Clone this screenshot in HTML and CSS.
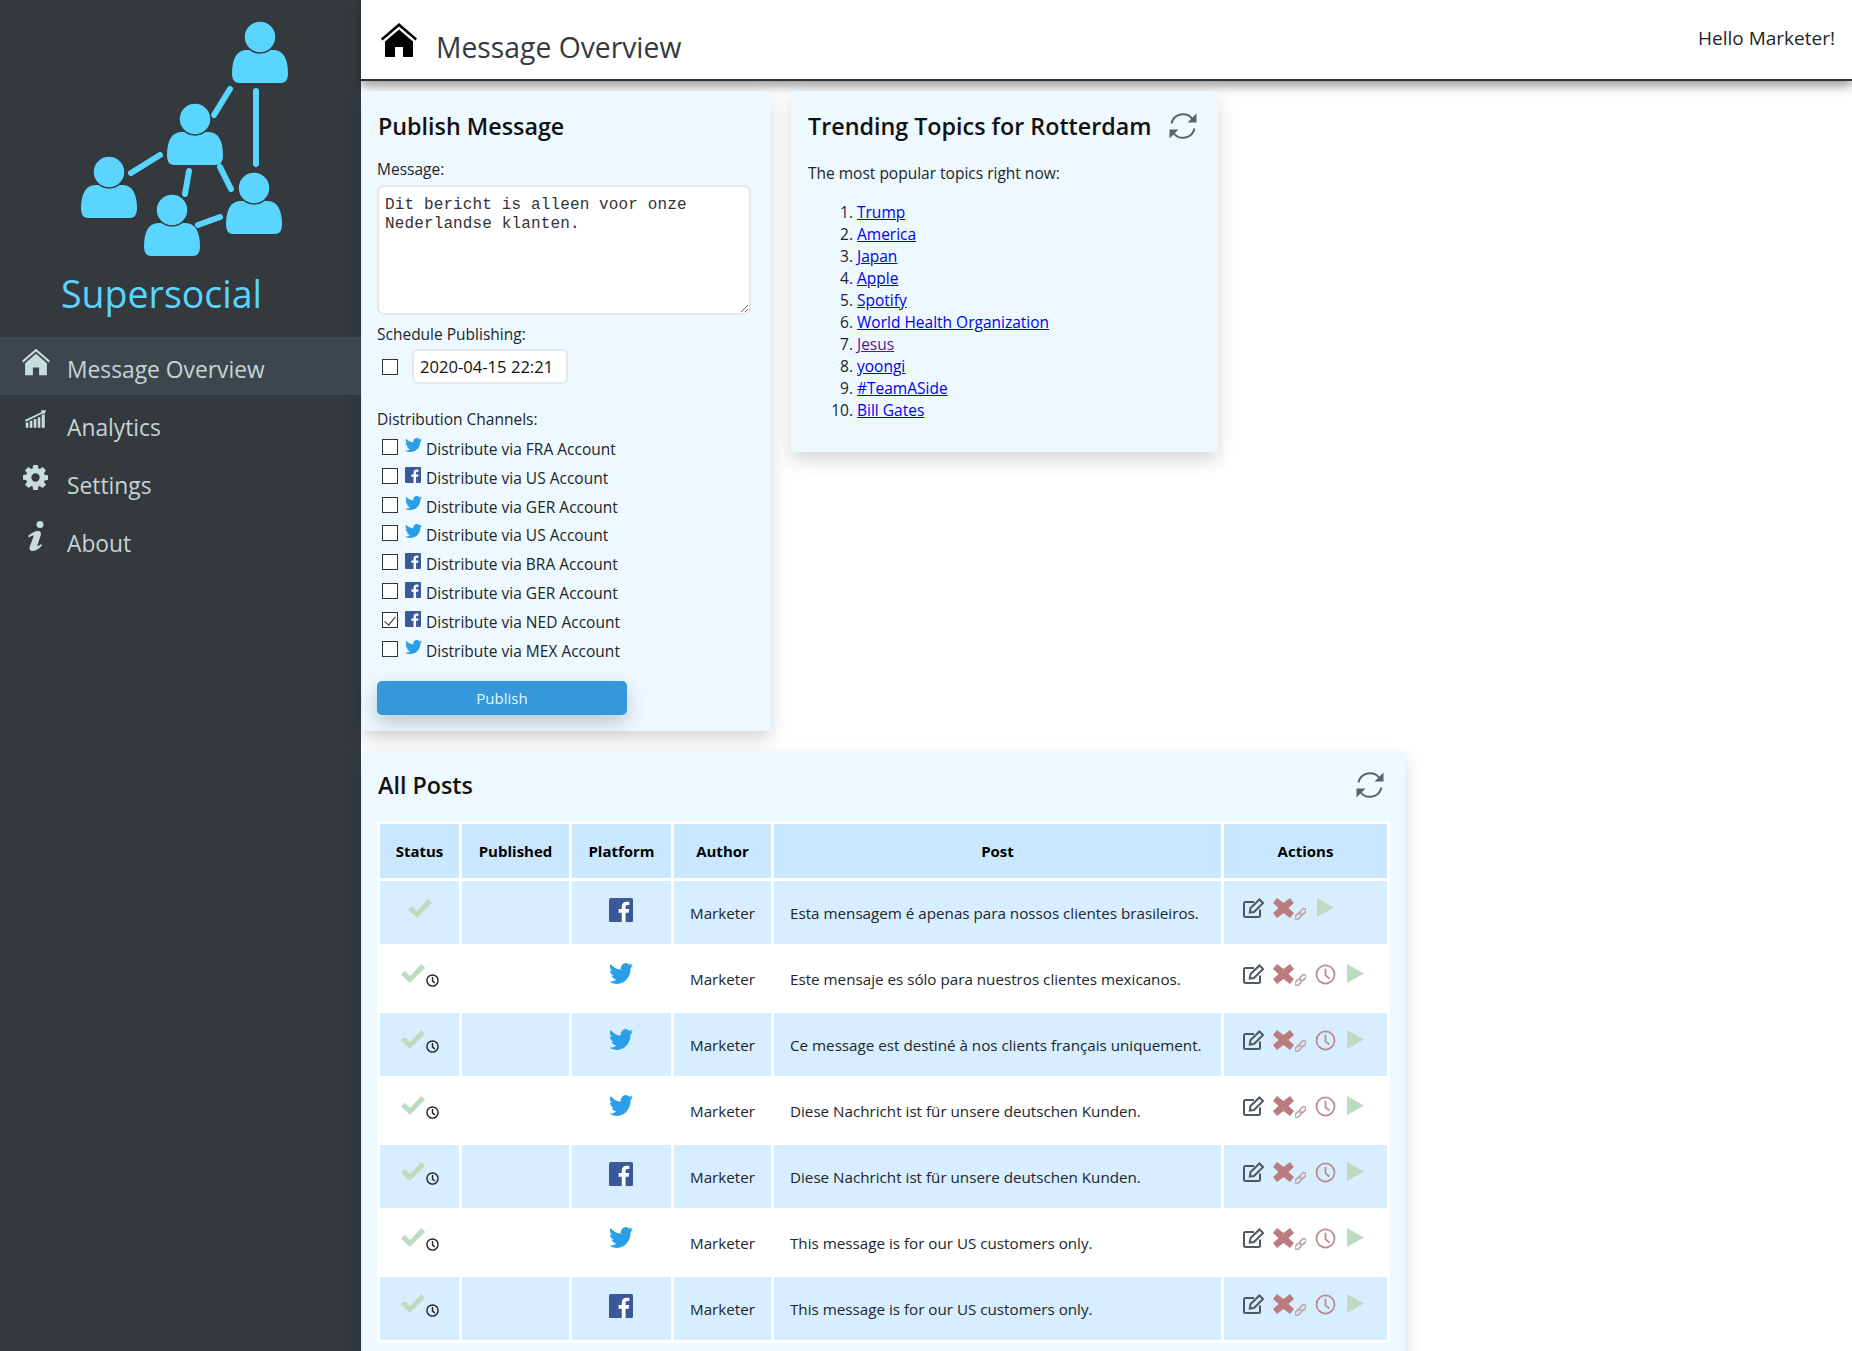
FILE: index.html
```html
<!DOCTYPE html>
<html lang="en">

<head>
    <meta charset="UTF-8">
    <meta name="viewport" content="width=device-width, initial-scale=1.0">
    <title>Supersocial - Message Overview</title>
    <link rel="stylesheet" href="styles.css">
</head>

<body>
    <!-- shared icons -->
    <svg class="icon-defs" xmlns="http://www.w3.org/2000/svg">
        <symbol id="i-home" viewBox="0 0 36 34">
            <path d="M18 0 36 15.500 34.500 17.500 18 3.500 1.500 17.500 0 15.500Z" />
            <path d="M18 6.500 32 18.500V34H22V24H14V34H4V18.500Z" />
        </symbol>
        <symbol id="i-twitter" viewBox="108 250 1576 1290" preserveAspectRatio="none">
            <path d="M1684 408q-67 98-162 167 1 14 1 42 0 130-38 259.500t-115.500 248.500-184.500 210.500-258 146-323 54.500q-271 0-496-145 35 4 78 4 225 0 401-138-105-2-188-64.500t-114-159.500q33 5 61 5 43 0 85-11-112-23-185.500-111.500t-73.500-205.500v-4q68 38 146 41-66-44-105-115t-39-154q0-88 44-163 121 149 294.500 238.500t371.500 99.500q-8-38-8-74 0-134 94.500-228.500t228.500-94.500q140 0 236 102 109-21 205-78-37 115-142 178 100-11 200-54z" />
        </symbol>
        <symbol id="i-facebook" viewBox="0 0 24 24">
            <rect width="24" height="24" rx="1.500" fill="#3b5998" />
            <path fill="#fff" d="M16.600 24v-9.300h3.100l.5-3.600h-3.600V8.800c0-1 .3-1.800 1.800-1.800h1.900V3.800c-.3 0-1.500-.1-2.800-.1-2.800 0-4.700 1.700-4.700 4.800v2.600H9.600v3.600h3.200V24Z" />
        </symbol>
        <symbol id="i-refresh" viewBox="0 0 28 28">
            <path class="stroke" d="M2.500 11.500A11.800 11.800 0 0 1 23.500 7" />
            <path class="stroke" d="M25.500 16.500A11.800 11.800 0 0 1 4.500 21" />
            <path d="M27.500 1.500V10.500H18.500Z" />
            <path d="M.5 26.500V17.500H9.500Z" />
        </symbol>
        <symbol id="i-check" viewBox="0 0 24 19">
            <path d="M0 10.500 3.800 6.700 9 12 20.200 0 24 3.700 9 19Z" />
        </symbol>
        <symbol id="i-clock" viewBox="0 0 24 24">
            <circle class="stroke" cx="12" cy="12" r="10.300" />
            <path class="stroke" d="M12 5.500V13L16.500 16.500" />
        </symbol>
        <symbol id="i-edit" viewBox="0 0 22 20">
            <path class="stroke" d="M17 11.500V17.500Q17 19 15.500 19H2.500Q1 19 1 17.500V5.500Q1 4 2.500 4H11" />
            <path class="stroke" d="M7.500 10 16.500 1.500 20 5 11 14 6.800 14.500Z" />
        </symbol>
        <symbol id="i-cross" viewBox="0 0 21 20">
            <path d="M4 0 10.500 5 17 0 21 5 15.500 10 21 15 17 20 10.500 15 4 20 0 15 5.500 10 0 5Z" />
        </symbol>
        <symbol id="i-link" viewBox="0 0 12 12">
            <g class="stroke" transform="rotate(-45 6 6)">
                <rect x="-1.500" y="3.800" width="7.500" height="4.400" rx="2.200" />
                <rect x="6" y="3.800" width="7.500" height="4.400" rx="2.200" />
            </g>
        </symbol>
        <symbol id="i-play" viewBox="0 0 17 19">
            <path d="M0 0 17 9.500 0 19Z" />
        </symbol>
    </svg>

    <div class="app">
        <nav class="sidebar">
            <svg class="logo" viewBox="0 0 361 270" xmlns="http://www.w3.org/2000/svg">
                <defs>
                    <g id="person">
                        <path d="M-14 13H14C23 13 28 22 28 36 28 42 26 46 21 46H-21C-26 46-28 42-28 36-28 22-23 13-14 13Z" />
                        <circle cy="0" r="16" stroke="#33393d" stroke-width="1.500" />
                    </g>
                </defs>
                <g class="logo-lines">
                    <line x1="230" y1="89" x2="214" y2="115" />
                    <line x1="256" y1="91" x2="256" y2="164" />
                    <line x1="160" y1="155" x2="131" y2="173" />
                    <line x1="189" y1="171" x2="185" y2="194" />
                    <line x1="220" y1="167" x2="231" y2="189" />
                    <line x1="220" y1="217" x2="198" y2="225" />
                </g>
                <use href="#person" x="260" y="37" />
                <use href="#person" x="195" y="119" />
                <use href="#person" x="109" y="172" />
                <use href="#person" x="172" y="210" />
                <use href="#person" x="254" y="188" />
            </svg>
            <div class="brand">Supersocial</div>
            <ul class="nav-list">
                <li class="nav-item active">
                    <svg class="nav-icon"><use href="#i-home" /></svg>
                    <span>Message Overview</span>
                </li>
                <li class="nav-item">
                    <svg class="nav-icon icon-analytics" viewBox="0 0 26 22" xmlns="http://www.w3.org/2000/svg">
                        <path d="M2 15h3v6H2zM6.500 13h3v8h-3zM11 11h3v10h-3zM15.500 9h3v12h-3zM20 6h3.500v15H20z" />
                        <path d="M1 12 20 3 19 1 25 1 23 6 21.500 4.500 2 14Z" />
                    </svg>
                    <span>Analytics</span>
                </li>
                <li class="nav-item">
                    <svg class="nav-icon icon-gear" viewBox="128 128 1536 1536" xmlns="http://www.w3.org/2000/svg">
                        <path d="M1152 896q0-106-75-181t-181-75-181 75-75 181 75 181 181 75 181-75 75-181zm512-109v222q0 12-8 23t-20 13l-185 28q-19 54-39 91 35 50 107 138 10 12 10 25t-9 23q-27 37-99 108t-94 71q-12 0-26-9l-138-108q-44 23-91 38-16 136-29 186-7 28-36 28h-222q-14 0-24.500-8.500t-11.500-21.500l-28-184q-49-16-90-37l-141 107q-10 9-25 9-14 0-25-11-126-114-165-168-7-10-7-23 0-12 8-23 15-21 51-66.500t54-70.500q-27-50-41-99l-183-27q-13-2-21-12.500t-8-23.500v-222q0-12 8-23t19-13l186-28q14-46 39-92-40-57-107-138-10-12-10-24 0-10 9-23 26-36 98.500-107.500t94.500-71.500q13 0 26 10l138 107q44-23 91-38 16-136 29-186 7-28 36-28h222q14 0 24.500 8.500t11.500 21.500l28 184q49 16 90 37l142-107q9-9 24-9 13 0 25 10 129 119 165 170 7 8 7 22 0 12-8 23-15 21-51 66.500t-54 70.500q26 50 41 98l183 28q13 2 21 12.500t8 23.500z" />
                    </svg>
                    <span>Settings</span>
                </li>
                <li class="nav-item">
                    <svg class="nav-icon icon-info" viewBox="0 0 20 30" xmlns="http://www.w3.org/2000/svg">
                        <circle cx="14" cy="3.500" r="3.500" />
                        <path d="M2 15C5 12 9 10 12 10 15 10 15.500 12.500 14.500 15L11.500 24C11 25.500 12 25.500 15 23L16 24.500C13 28 9.500 30 6.500 30 3.500 30 3 27.500 4 25L7.500 15.500C8 14 7 14 3 16.500Z" />
                    </svg>
                    <span>About</span>
                </li>
            </ul>
        </nav>

        <div class="main">
            <header class="topbar">
                <svg class="topbar-icon"><use href="#i-home" /></svg>
                <h1>Message Overview</h1>
                <div class="greeting">Hello Marketer!</div>
            </header>

            <div class="content">
                <div class="card-row">
                    <section class="card publish-card">
                        <h2>Publish Message</h2>
                        <label class="field-label" for="message">Message:</label>
                        <textarea id="message">Dit bericht is alleen voor onze Nederlandse klanten.</textarea>
                        <label class="field-label schedule-label" for="schedule">Schedule Publishing:</label>
                        <div class="schedule-row">
                            <input type="checkbox" class="check">
                            <input type="text" id="schedule" value="2020-04-15 22:21">
                        </div>
                        <div class="field-label channels-label">Distribution Channels:</div>
                        <label class="channel"><input type="checkbox" class="check"><svg class="tw"><use href="#i-twitter" /></svg>Distribute via FRA Account</label>
                        <label class="channel"><input type="checkbox" class="check"><svg class="fb"><use href="#i-facebook" /></svg>Distribute via US Account</label>
                        <label class="channel"><input type="checkbox" class="check"><svg class="tw"><use href="#i-twitter" /></svg>Distribute via GER Account</label>
                        <label class="channel"><input type="checkbox" class="check"><svg class="tw"><use href="#i-twitter" /></svg>Distribute via US Account</label>
                        <label class="channel"><input type="checkbox" class="check"><svg class="fb"><use href="#i-facebook" /></svg>Distribute via BRA Account</label>
                        <label class="channel"><input type="checkbox" class="check"><svg class="fb"><use href="#i-facebook" /></svg>Distribute via GER Account</label>
                        <label class="channel"><input type="checkbox" class="check" checked><svg class="fb"><use href="#i-facebook" /></svg>Distribute via NED Account</label>
                        <label class="channel"><input type="checkbox" class="check"><svg class="tw"><use href="#i-twitter" /></svg>Distribute via MEX Account</label>
                        <button type="button" class="publish-btn">Publish</button>
                    </section>

                    <section class="card trending-card">
                        <div class="card-head">
                            <h2>Trending Topics for Rotterdam</h2>
                            <svg class="refresh"><use href="#i-refresh" /></svg>
                        </div>
                        <p class="trending-intro">The most popular topics right now:</p>
                        <ol class="topics">
                            <li><a href="#">Trump</a></li>
                            <li><a href="#">America</a></li>
                            <li><a href="#">Japan</a></li>
                            <li><a href="#">Apple</a></li>
                            <li><a href="#">Spotify</a></li>
                            <li><a href="#">World Health Organization</a></li>
                            <li><a href="#" class="visited">Jesus</a></li>
                            <li><a href="#">yoongi</a></li>
                            <li><a href="#">#TeamASide</a></li>
                            <li><a href="#">Bill Gates</a></li>
                        </ol>
                    </section>
                </div>

                <section class="card posts-card">
                    <div class="card-head">
                        <h2>All Posts</h2>
                        <svg class="refresh"><use href="#i-refresh" /></svg>
                    </div>
                    <table class="posts">
                        <colgroup>
                            <col class="col-status">
                            <col class="col-published">
                            <col class="col-platform">
                            <col class="col-author">
                            <col class="col-post">
                            <col class="col-actions">
                        </colgroup>
                        <thead>
                            <tr>
                                <th>Status</th>
                                <th>Published</th>
                                <th>Platform</th>
                                <th>Author</th>
                                <th>Post</th>
                                <th>Actions</th>
                            </tr>
                        </thead>
                        <tbody>
                            <tr>
                                <td class="status"><svg class="ok"><use href="#i-check" /></svg></td>
                                <td></td>
                                <td class="platform"><svg class="fb-big"><use href="#i-facebook" /></svg></td>
                                <td>Marketer</td>
                                <td>Esta mensagem é apenas para nossos clientes brasileiros.</td>
                                <td>
                                    <div class="actions">
                                        <svg class="a-edit"><use href="#i-edit" /></svg><svg class="a-cross"><use href="#i-cross" /></svg><svg class="a-link"><use href="#i-link" /></svg><svg class="a-play"><use href="#i-play" /></svg>
                                    </div>
                                </td>
                            </tr>
                            <tr>
                                <td class="status"><svg class="ok"><use href="#i-check" /></svg><svg class="sched"><use href="#i-clock" /></svg></td>
                                <td></td>
                                <td class="platform"><svg class="tw-big"><use href="#i-twitter" /></svg></td>
                                <td>Marketer</td>
                                <td>Este mensaje es sólo para nuestros clientes mexicanos.</td>
                                <td>
                                    <div class="actions">
                                        <svg class="a-edit"><use href="#i-edit" /></svg><svg class="a-cross"><use href="#i-cross" /></svg><svg class="a-link"><use href="#i-link" /></svg><svg class="a-clock"><use href="#i-clock" /></svg><svg class="a-play"><use href="#i-play" /></svg>
                                    </div>
                                </td>
                            </tr>
                            <tr>
                                <td class="status"><svg class="ok"><use href="#i-check" /></svg><svg class="sched"><use href="#i-clock" /></svg></td>
                                <td></td>
                                <td class="platform"><svg class="tw-big"><use href="#i-twitter" /></svg></td>
                                <td>Marketer</td>
                                <td>Ce message est destiné à nos clients français uniquement.</td>
                                <td>
                                    <div class="actions">
                                        <svg class="a-edit"><use href="#i-edit" /></svg><svg class="a-cross"><use href="#i-cross" /></svg><svg class="a-link"><use href="#i-link" /></svg><svg class="a-clock"><use href="#i-clock" /></svg><svg class="a-play"><use href="#i-play" /></svg>
                                    </div>
                                </td>
                            </tr>
                            <tr>
                                <td class="status"><svg class="ok"><use href="#i-check" /></svg><svg class="sched"><use href="#i-clock" /></svg></td>
                                <td></td>
                                <td class="platform"><svg class="tw-big"><use href="#i-twitter" /></svg></td>
                                <td>Marketer</td>
                                <td>Diese Nachricht ist für unsere deutschen Kunden.</td>
                                <td>
                                    <div class="actions">
                                        <svg class="a-edit"><use href="#i-edit" /></svg><svg class="a-cross"><use href="#i-cross" /></svg><svg class="a-link"><use href="#i-link" /></svg><svg class="a-clock"><use href="#i-clock" /></svg><svg class="a-play"><use href="#i-play" /></svg>
                                    </div>
                                </td>
                            </tr>
                            <tr>
                                <td class="status"><svg class="ok"><use href="#i-check" /></svg><svg class="sched"><use href="#i-clock" /></svg></td>
                                <td></td>
                                <td class="platform"><svg class="fb-big"><use href="#i-facebook" /></svg></td>
                                <td>Marketer</td>
                                <td>Diese Nachricht ist für unsere deutschen Kunden.</td>
                                <td>
                                    <div class="actions">
                                        <svg class="a-edit"><use href="#i-edit" /></svg><svg class="a-cross"><use href="#i-cross" /></svg><svg class="a-link"><use href="#i-link" /></svg><svg class="a-clock"><use href="#i-clock" /></svg><svg class="a-play"><use href="#i-play" /></svg>
                                    </div>
                                </td>
                            </tr>
                            <tr>
                                <td class="status"><svg class="ok"><use href="#i-check" /></svg><svg class="sched"><use href="#i-clock" /></svg></td>
                                <td></td>
                                <td class="platform"><svg class="tw-big"><use href="#i-twitter" /></svg></td>
                                <td>Marketer</td>
                                <td>This message is for our US customers only.</td>
                                <td>
                                    <div class="actions">
                                        <svg class="a-edit"><use href="#i-edit" /></svg><svg class="a-cross"><use href="#i-cross" /></svg><svg class="a-link"><use href="#i-link" /></svg><svg class="a-clock"><use href="#i-clock" /></svg><svg class="a-play"><use href="#i-play" /></svg>
                                    </div>
                                </td>
                            </tr>
                            <tr>
                                <td class="status"><svg class="ok"><use href="#i-check" /></svg><svg class="sched"><use href="#i-clock" /></svg></td>
                                <td></td>
                                <td class="platform"><svg class="fb-big"><use href="#i-facebook" /></svg></td>
                                <td>Marketer</td>
                                <td>This message is for our US customers only.</td>
                                <td>
                                    <div class="actions">
                                        <svg class="a-edit"><use href="#i-edit" /></svg><svg class="a-cross"><use href="#i-cross" /></svg><svg class="a-link"><use href="#i-link" /></svg><svg class="a-clock"><use href="#i-clock" /></svg><svg class="a-play"><use href="#i-play" /></svg>
                                    </div>
                                </td>
                            </tr>
                        </tbody>
                    </table>
                </section>
            </div>
        </div>
    </div>
</body>

</html>
```
FILE: styles.css
```css
* {
    box-sizing: border-box;
}

body {
    font-family: "Open Sans", "Noto Sans", sans-serif;
    font-size: 15.500px;
    color: #212529;
    background-color: #fff;
    margin: 0;
}

.icon-defs {
    display: none;
}

.stroke {
    fill: none;
    stroke: currentColor;
    stroke-width: var(--stroke, 2);
}

.app {
    display: flex;
    height: 100vh;
    overflow: hidden;
}

/* sidebar */
.sidebar {
    width: 361px;
    flex-shrink: 0;
    background-color: #33393d;
}

.logo {
    display: block;
    width: 361px;
    height: 270px;
    fill: #5ad5ff;
}

.logo-lines line {
    stroke: #5ad5ff;
    stroke-width: 6;
    stroke-linecap: round;
}

.brand {
    color: #5ad5ff;
    font-size: 37.500px;
    line-height: 47px;
    margin-left: 61px;
}

.nav-list {
    list-style: none;
    margin: 20px 0 0;
    padding: 0;
}

.nav-item {
    display: flex;
    align-items: flex-start;
    height: 58px;
    color: #c6d3d6;
    font-size: 22.800px;
    line-height: 65px;
    padding-left: 67px;
    position: relative;
}

.nav-item.active {
    background-color: #3e464d;
}

.nav-icon {
    position: absolute;
    left: 22px;
    top: 11px;
    width: 28px;
    height: 28px;
    fill: #c9dcdc;
}

.icon-analytics {
    left: 24px;
    top: 14px;
    width: 23px;
    height: 20px;
}

.icon-gear {
    left: 23px;
    top: 12px;
    width: 25px;
    height: 25px;
}

.icon-info {
    left: 26px;
    top: 10px;
    width: 20px;
    height: 30px;
}

/* header */
.main {
    flex: 1;
    min-width: 0;
}

.topbar {
    display: flex;
    height: 81px;
    border-bottom: 2px solid #333;
    box-shadow: 0 5px 10px rgba(0, 0, 0, 0.4);
    padding: 23px 17px 0 20px;
}

.topbar-icon {
    width: 36px;
    height: 34px;
    fill: #000;
}

.topbar h1 {
    flex: 1;
    color: #343a40;
    font-size: 28.300px;
    font-weight: 400;
    line-height: 38px;
    margin: 5px 0 0 19px;
}

.greeting {
    color: #212529;
    font-size: 19px;
    line-height: 28px;
    margin-top: 1px;
}

/* cards */
.content {
    padding: 10px 0 0 1px;
}

.card-row {
    display: flex;
    align-items: flex-start;
    gap: 20px;
}

.card {
    background-color: #edf8ff;
    border-radius: 4px;
    box-shadow: 0 8px 18px rgba(0, 0, 0, 0.16);
    padding: 15px 16px 16px;
}

.card h2 {
    color: #111;
    font-size: 23.300px;
    font-weight: 600;
    line-height: 40px;
    margin: 0;
}

.card-head {
    display: flex;
    justify-content: space-between;
    align-items: center;
}

.refresh {
    width: 28px;
    height: 28px;
    color: #5b6369;
    fill: #5b6369;
}

/* publish form */
.publish-card {
    width: 409px;
    height: 640px;
    padding-left: 15px;
}

.field-label {
    display: block;
    line-height: 22px;
}

.publish-card h2 {
    margin: 0 0 12px 1px;
}

#message {
    display: block;
    width: 374px;
    height: 130px;
    border: 2px solid #e3e8ec;
    border-radius: 7px;
    background-color: #fff;
    color: #333;
    font-family: "Liberation Mono", monospace;
    font-size: 16px;
    letter-spacing: 0.13px;
    line-height: 19px;
    padding: 9px 6px;
    margin-top: 5px;
    outline: none;
}

.schedule-label {
    margin-top: 8px;
}

.schedule-row {
    display: flex;
    align-items: center;
    gap: 14px;
    margin: 4px 0 0 5px;
}

#schedule {
    width: 156px;
    height: 35px;
    border: 2px solid #e3e8ec;
    border-radius: 6px;
    background-color: #fff;
    color: #111;
    font-family: inherit;
    font-size: 16.600px;
    padding: 0 6px;
}

.channels-label {
    margin: 24px 0 6px;
}

.check {
    appearance: none;
    width: 16px;
    height: 16px;
    flex-shrink: 0;
    background-color: #fff;
    border: 1px solid #333;
    margin: 0;
    position: relative;
}

.check:checked::after {
    content: "";
    position: absolute;
    left: 4px;
    top: 1px;
    width: 5px;
    height: 10px;
    border: solid #333;
    border-width: 0 1px 1px 0;
    transform: rotate(40deg);
}

.channel {
    display: flex;
    align-items: flex-start;
    height: 28.800px;
    line-height: 26px;
    padding-left: 5px;
}

.channel .check {
    margin: 3px 7px 0 0;
}

.channel svg {
    margin-top: 2px;
    margin-right: 5px;
}

.channel svg.tw {
    margin-right: 4px;
}

.tw {
    width: 17px;
    height: 14px;
    fill: #2a9ee9;
}

.fb {
    width: 16px;
    height: 16px;
}

.publish-btn {
    display: block;
    width: 250px;
    height: 34px;
    background-color: #3498db;
    border: none;
    border-radius: 5px;
    box-shadow: 0 8px 20px rgba(0, 0, 0, 0.2);
    color: #e8f6ff;
    cursor: pointer;
    font-family: inherit;
    font-size: 15px;
    margin-top: 15px;
}

/* trending */
.trending-card {
    width: 427px;
    height: 361px;
    padding-right: 21px;
    padding-left: 17px;
}

.trending-intro {
    line-height: 22px;
    margin: 16px 0 0;
}

.topics {
    line-height: 22px;
    margin: 17px 0 0;
    padding-left: 49px;
}

.topics a {
    color: #0000ee;
}

.topics a.visited {
    color: #551a8b;
}

/* all posts */
.posts-card {
    width: 1043px;
    margin-top: 20px;
    padding-top: 14px;
    padding-right: 15px;
}

.posts-card .refresh {
    margin-right: 6px;
}

.posts {
    width: 1013px;
    table-layout: fixed;
    background-color: #fff;
    border-spacing: 3px;
    margin: 16px 0 0 -1px;
    font-size: 15.200px;
}

.col-status { width: 79px; }
.col-published { width: 107px; }
.col-platform { width: 99px; }
.col-author { width: 97px; }
.col-post { width: 447px; }

.posts th {
    background-color: #c9e8ff;
    color: #000;
    font-size: 15px;
    font-weight: 700;
    height: 54px;
}

.posts td {
    height: 63px;
    padding: 0 0 0 16px;
    line-height: 20px;
}

.posts tbody tr:nth-child(odd) td {
    background-color: #d6eeff;
}

.posts td.status {
    padding: 0 0 11px;
    text-align: center;
}

.ok {
    width: 24px;
    height: 19px;
    fill: #bcdcc0;
    vertical-align: middle;
}

.sched {
    --stroke: 2.600;
    width: 13px;
    height: 13px;
    color: #222;
    margin: 15px 0 0 1px;
    vertical-align: middle;
}

.posts td.platform {
    padding: 0 2px 6px 0;
    text-align: center;
}

.fb-big {
    width: 24px;
    height: 24px;
    vertical-align: middle;
}

.tw-big {
    width: 24px;
    height: 21px;
    fill: #2a9ee9;
    margin-bottom: 4px;
    vertical-align: middle;
}

.actions {
    display: flex;
    align-items: flex-start;
    padding: 0 0 8px 3px;
}

.a-edit {
    width: 22px;
    height: 20px;
    color: #4f5961;
}

.a-cross {
    width: 21px;
    height: 20px;
    fill: #bb7c80;
    margin-left: 8px;
}

.a-link {
    width: 11px;
    height: 12px;
    color: #c2a9ad;
    margin: 10px 0 0 1px;
}

.a-clock {
    width: 21px;
    height: 21px;
    color: #bb8a8e;
    margin-left: 9px;
}

.a-play {
    width: 17px;
    height: 19px;
    fill: #bcdcc0;
    margin-left: 11px;
}
```
